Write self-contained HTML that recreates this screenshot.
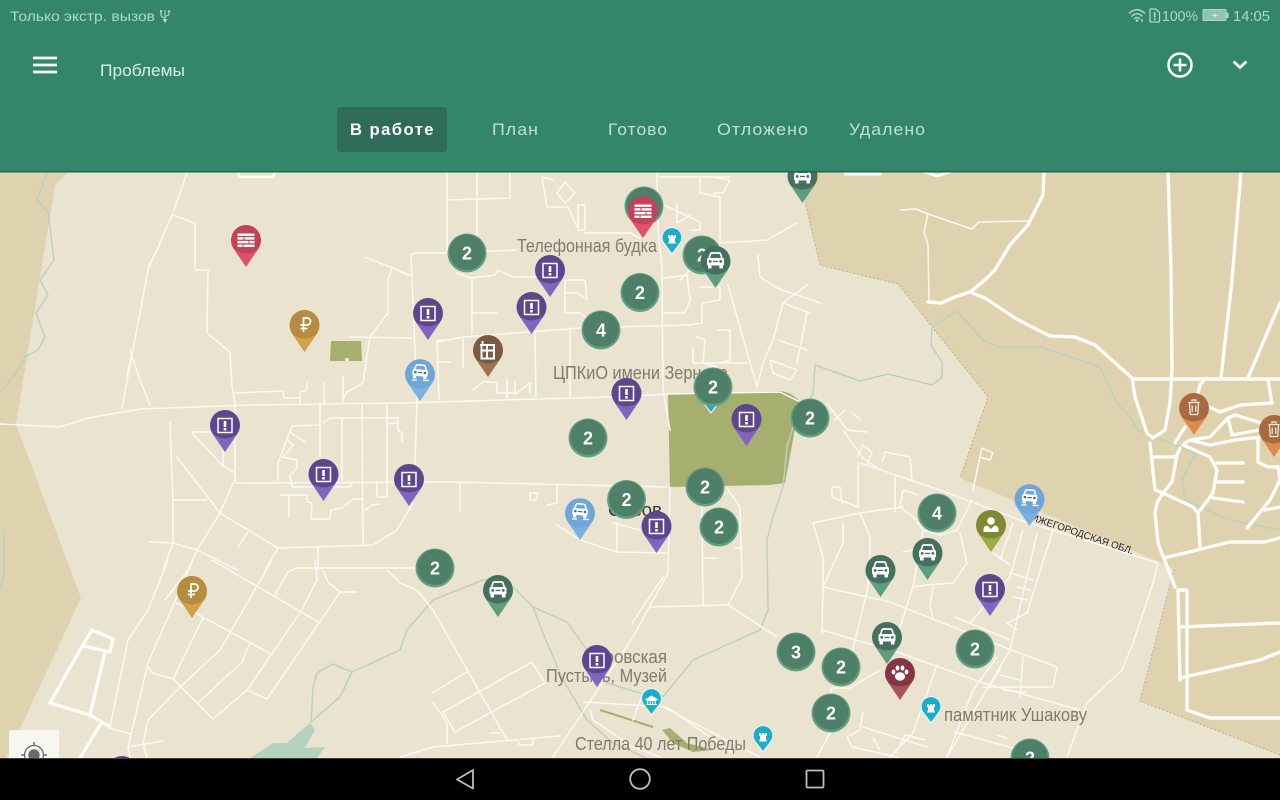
<!DOCTYPE html>
<html lang="ru"><head><meta charset="utf-8"><title>Проблемы</title>
<style>
html,body{margin:0;padding:0;background:#000;width:1280px;height:800px;overflow:hidden}
svg{display:block;font-family:"Liberation Sans","Noto Sans CJK SC",sans-serif}
.t{fill:none;stroke:#FBF9F2;stroke-width:1.5;stroke-linejoin:round;stroke-linecap:round}
.k{fill:none;stroke:#FDFCF8;stroke-width:3.4;stroke-linejoin:round;stroke-linecap:round}
.r{fill:none;stroke:#BBD1BE;stroke-width:1.5;stroke-linejoin:round}
.l{font-size:18px;fill:#85796D}
.n{font-size:18px;font-weight:bold;fill:#fff;text-anchor:middle}
.tab{font-size:17px;fill:#BFE0D2;letter-spacing:1px}
</style></head><body>
<svg width="1280" height="800" viewBox="0 0 1280 800" xmlns="http://www.w3.org/2000/svg">
<defs>
<path id="b" d="M0 0L-12.6-18.5A15 15 0 1 1 12.6-18.5Z"/>
<path id="h" d="M0-42A14.8 14.8 0 0 0-14.8-27A15 15 0 0 0-11-17Q0-10 11-17A15 15 0 0 0 14.8-27A14.8 14.8 0 0 0 0-42Z"/>
<g id="cl"><circle r="19.5" fill="#63A083"/><circle cy="-.8" r="17.8" fill="#4E8068"/></g>
<g id="car"><path d="M-6.5-3.5L-5-8Q-4.6-9-3.5-9H3.5Q4.6-9 5-8L6.5-3.5" fill="none" stroke="#fff" stroke-width="1.7"/><rect x="-8.5" y="-4" width="17" height="7.5" rx="1.6" fill="#fff"/><rect x="-7.5" y="3" width="3.6" height="3.5" rx=".8" fill="#fff"/><rect x="3.9" y="3" width="3.6" height="3.5" rx=".8" fill="#fff"/><circle cx="-5.3" cy="-.6" r="1.4" fill="#466F5E"/><circle cx="5.3" cy="-.6" r="1.4" fill="#466F5E"/><rect x="-2.5" y="-1.2" width="5" height="1.3" fill="#466F5E"/></g>
<g id="p-alert"><use href="#b" fill="#8264BE"/><use href="#h" fill="#5E468F"/><rect x="-7" y="-33.5" width="14" height="14" fill="none" stroke="#fff" stroke-width="1.5"/><rect x="-1.3" y="-31" width="2.6" height="6" fill="#fff"/><rect x="-1.3" y="-24" width="2.6" height="2.5" fill="#fff"/></g>
<g id="p-red"><use href="#b" fill="#DF5368"/><use href="#h" fill="#C04359"/><g fill="#fff"><rect x="-8.5" y="-33.5" width="17" height="2.4"/><rect x="-8.5" y="-29.8" width="6" height="2.4"/><rect x="-1.5" y="-29.8" width="10" height="2.4"/><rect x="-8.5" y="-26.1" width="11" height="2.4"/><rect x="3.5" y="-26.1" width="5" height="2.4"/><rect x="-8.5" y="-22.4" width="5" height="2.4"/><rect x="-2.5" y="-22.4" width="11" height="2.4"/></g></g>
<g id="p-rub"><use href="#b" fill="#CFA24B"/><use href="#h" fill="#B68C40"/><path d="M-1-20V-34H2.500A3.500 3.500 0 0 1 2.500-27H-4M-4-23.500H3" fill="none" stroke="#fff" stroke-width="1.700"/></g>
<g id="p-green"><use href="#b" fill="#5E9E7F"/><use href="#h" fill="#466F5E"/><use href="#car" y="-26"/></g>
<g id="p-blue"><use href="#b" fill="#7AB0E2"/><circle cy="-27" r="14.8" fill="#6FA6D9"/><g transform="translate(0,-27) rotate(5) scale(.9)"><use href="#car" y="-1"/></g><path d="M-8-21H-3M3-20.500H9" stroke="#fff" stroke-width="1.2"/></g>
<g id="p-brown"><use href="#b" fill="#9C7453"/><use href="#h" fill="#7B5942"/><path d="M-5.500-36V-33M-8-32H7M-6.500-32V-18.500H6V-32M-6.500-26.500H6M-1-32V-18.500" fill="none" stroke="#fff" stroke-width="1.900"/></g>
<g id="p-olive"><use href="#b" fill="#9BAB47"/><use href="#h" fill="#7E8A32"/><circle cy="-31" r="3.800" fill="#fff"/><path d="M-7.500-20V-23Q-7.500-26-3.500-26.500L0-23L3.500-26.500Q7.500-26 7.500-23V-20Z" fill="#fff"/></g>
<g id="p-paw"><use href="#b" fill="#A6555F"/><use href="#h" fill="#843743"/><g fill="#fff"><ellipse cy="-23.500" rx="5" ry="4.200"/><ellipse cx="-6.500" cy="-28" rx="1.900" ry="2.500"/><ellipse cx="6.500" cy="-28" rx="1.900" ry="2.500"/><ellipse cx="-2.500" cy="-32" rx="1.900" ry="2.600"/><ellipse cx="2.500" cy="-32" rx="1.900" ry="2.600"/></g></g>
<g id="p-trash"><use href="#b" fill="#DE8A4E"/><use href="#h" fill="#A96A42"/><path d="M-5.500-32.500H5.500M-2-33.500V-35H2V-33.500M-4.500-32L-3.800-20.500H3.800L4.500-32M-1.800-29.500V-23M1.800-29.500V-23" fill="none" stroke="#F4EFE6" stroke-width="1.200"/></g>
<g id="poi"><path d="M0 0L-8.400-11.500A10.300 10.300 0 1 1 8.400-11.500Z" fill="#F4F6F0"/><path d="M0-2L-7.600-12A9.400 9.400 0 1 1 7.600-12Z" fill="#1CAEC8"/><path d="M-4-11.500H4L3-14V-17H4V-20H2V-18.500H1V-20H-1V-18.500H-2V-20H-4V-17H-3V-14Z" fill="#fff"/></g>
<g id="poim"><path d="M0 0L-8.400-11.500A10.300 10.300 0 1 1 8.400-11.500Z" fill="#F4F6F0"/><path d="M0-2L-7.600-12A9.400 9.400 0 1 1 7.600-12Z" fill="#1CAEC8"/><path d="M-5.500-16.500L0-20L5.500-16.500ZM-5-15.500H5M-5.500-11.500H5.500M-3.800-15V-12M-1.300-15V-12M1.300-15V-12M3.800-15V-12" fill="#fff" stroke="#fff" stroke-width="1"/></g>
</defs>

<!-- map base -->
<rect y="172" width="1280" height="586" fill="#EAE3CF"/>
<path d="M0 172H68L55 185L16 424L81 598L10 750L0 770Z" fill="#DED2AF"/>
<path d="M806 172L805 205L820 265L898 284L988 397L960 478L1160 562L1174 569L1140 701L1280 755V172Z" fill="#DED2AF"/>
<path d="M806 205L820 265L898 284L988 397L960 478M1174 569L1140 701L1280 755" fill="none" stroke="#B9AF98" stroke-width="1" stroke-dasharray="2 2"/>
<!-- park -->
<path d="M668 394L780 391Q792 392 800 402L785 483L770 485L670 487Z" fill="#A7AF6F"/>
<path d="M331 341H361L362 361H349V358H345V361H330Z" fill="#A7AF6F"/>
<path d="M662 730L670 728L687 743L713 750L693 752L673 743Z" fill="#A7AF6F"/>
<path d="M600 710L653 727" stroke="#A7AF6F" stroke-width="2" fill="none"/>
<!-- water -->
<path d="M250 758L273 743L287 743L310 723L315 730L305 748L325 747L317 758Z" fill="#B5D1BF"/>
<g class="r">
<path d="M47 173L37 200L48 212L54 260L40 280L48 295L36 313L45 337L38 350L25 357L15 375L0 392"/>
<path d="M4 530V575L0 590"/>
<path d="M311 723L313 687L317 673L333 664L352 672L400 650L407 630L433 600L483 580L500 578"/>
<path d="M311 722L340 697L352 672"/>
<path d="M513 587L533 607L567 622L587 650L607 683L640 693L665 696"/>
<path d="M533 607L543 633L563 680L587 720L613 743L650 760"/>
<path d="M663 697L693 660L760 630L768 610L767 540L772 520L783 487L787 447L793 427L812 395"/>
<path d="M813 395L815 365L860 381L888 374L932 385L942 377L942 362L931 345L932 327L957 311L983 340L998 347L1040 347L1073 358L1100 367L1117 403L1133 420L1137 430L1180 447L1195 453L1182 480L1185 500L1230 520L1280 530"/>
</g>
<!-- thin roads -->
<g class="t">
<!-- main E-W -->
<path d="M0 424L60 427L88 418L140 409L250 405L400 403L610 397L668 394L780 392L800 402"/>
<path d="M122 408L149 265L160 245M187 173L173 213L150 265M133 350L127 375M130 350L140 380L150 405"/>
<path d="M173 215L195 223V270H208L207 333L230 352L232 387L235 405V482"/>
<path d="M234 393L283 391L284 398H300V392L307 390V383M300 392V403M324 383V403M343 377V403M343 400L347 392L363 383L370 337L388 313V280L392 268M365 257L410 275M350 337L412 338"/>
<path d="M415 463L417 400L411 255Q412 253 417 253H447L517 250M400 272L410 275"/>
<path d="M447 173V253M477 173V250M510 173V198L447 200"/>
<path d="M437 340L439 400M437 340H450M437 362H450"/>
<!-- West quarter -->
<path d="M320 405V457M362 405L363 545M387 405V497H377V482M342 418V480M323 423L330 418H398V430L402 433V442M387 424L398 423"/>
<path d="M320 425L292 426L278 463V480M290 432L305 442M287 440L293 445L283 457L297 460V468L290 475L292 487H350L353 482"/>
<path d="M235 483L450 482L667 487"/>
<path d="M280 495H307V502L312 503L311 519H330L331 510L342 508L353 499H363M289 495V517M365 510L372 505L380 504"/>
<path d="M233 483L220 513L197 550L188 570L165 600"/>
<path d="M220 513L278 548L373 545L397 530L413 503"/>
<path d="M170 422L173 503V543L163 570M173 500H207M177 457L220 513"/>
<path d="M192 432H210M192 433L222 465L235 473M223 452V465"/>
<path d="M150 542L173 543L197 550L237 570M248 532L238 547M278 548L265 570M318 548V570"/>
<!-- SW -->
<path d="M168 560L148 610L128 640L110 727"/>
<path d="M193 560L148 663L128 747L130 758"/>
<path d="M148 667L153 673L173 679L213 719L247 690L267 699L340 592H357M173 679L203 618"/>
<path d="M175 602L273 655M212 560L320 623"/>
<path d="M272 560L220 650L180 687L148 720L143 743L147 758M198 703L242 662L250 643"/>
<path d="M315 560L317 580L300 613L247 690"/>
<path d="M275 595L288 572L297 568L450 568M323 570L328 582L340 592M128 747L163 741M387 570L400 583"/>
<path d="M110 728L130 734"/>
<!-- center south -->
<path d="M400 583L417 590L433 610L507 740M443 712L532 662L545 683L455 732ZM432 693L467 672M433 702L447 723V743M400 757L433 747L560 736M517 740L520 745H533V738M490 733H500"/>
<path d="M553 757L633 637L668 573L670 487M632 623L663 577"/>
<path d="M650 607L728 605L777 637M703 605L702 507M728 605L742 577L740 507L727 488"/>
<path d="M460 483V512M557 485V503L547 505M530 493H538L536 500H530ZM557 525L580 540L617 552L667 553M617 523V552M613 523L640 530M702 558H718M735 548H742"/>
<path d="M583 702L667 707L733 753M633 720L643 693M590 710L593 720L633 747L660 757M665 708L760 757"/>
<!-- center north -->
<path d="M535 333L536 397M570 328V397M437 342L463 337L580 328L690 325M463 337V367M472 278V333M457 273L470 278L495 275L498 270L513 277H537M472 313H497"/>
<path d="M473 390L483 382H497V393H517L530 383V393M507 378V398M515 382V393"/>
<path d="M565 280H585L587 300M565 293H577L585 298M565 280V313H580L587 318"/>
<path d="M542 177L547 207H568L577 227M557 193L565 182L575 193L565 203ZM542 177L553 180M578 205H585V230H578ZM585 233H630L640 238"/>
<path d="M657 173L658 230L662 267L663 390L670 430"/>
<path d="M660 177H730M677 203V223L690 215M660 203L700 222V230H690M700 177V193L720 197V243L767 240L797 223M713 177L730 180L723 193H713"/>
<path d="M663 278L687 275L690 300L685 313H663M690 270L680 280"/>
<path d="M728 285L753 373L757 387M700 287H720V300L702 303V323L690 325M718 330H730V360L720 363M697 337L705 340L703 363L717 367M693 347V363H747"/>
<path d="M758 255L760 277L777 288L820 303M807 285L783 303L773 340L763 363L757 387M783 303L810 313M778 340L807 350M770 360L797 370L790 380L773 373ZM807 313L797 363"/>
<!-- east of park -->
<path d="M827 403L847 430L867 432M843 430L863 458L880 470M857 457L863 445L872 452L867 465M835 420L845 410M852 412L860 420"/>
<path d="M858 462V507L832 497V487H840L842 503M860 463L940 490L1020 520L1158 563M882 462L885 452L910 457L912 480M895 477V512M973 490L982 448L993 453L990 460L980 457"/>
<!-- SE quarter -->
<path d="M813 523L860 513L903 507M843 522V543L823 587L822 633M813 523L823 557V587M860 513L870 537V557L868 587L852 653"/>
<path d="M903 490L900 507L913 517L923 530L940 535L957 530L972 500M903 490L918 495M923 530L913 587L897 637M903 552L913 550M960 533L967 563L953 583L927 585L913 587M933 587L930 607L933 617"/>
<path d="M823 587L890 602L943 623L993 643L1057 667L1053 687H983M822 630L897 652L983 683L1080 710"/>
<path d="M993 553L1010 565M1013 523L1000 560M1023 530L1010 577L970 623M1037 533L1010 650L947 757M1053 530L1027 613L1007 623L1017 630M1010 573L1033 580M1017 587L1030 590M1013 597L1027 600M955 617L1010 640"/>
<path d="M997 657L973 690L947 757M1023 657L1020 698M1000 670L990 685M1020 680L1000 675M937 665L913 733L890 757M1003 690L1025 692"/>
<path d="M863 713L860 730L847 737L852 747L897 757M863 727L927 747M817 757L830 733L850 718M955 732L1013 748M997 735L1007 738M873 738L880 750M900 745L905 735L925 740"/>
<path d="M1158 563L1153 583L1133 643L1122 670L1087 703L1067 757"/>
<path d="M833 688H850L880 670M832 688L830 695"/>
<!-- NE thin -->
<path d="M900 210L916 209L928 214L972 229L979 222L1028 221M928 214L924 232L928 245L929 300"/>
</g>
<!-- thick roads -->
<g class="k">
<path d="M1044 172L1043 195L1028 225L1010 245L995 270L985 280L970 292L955 297L941 303L928 302"/>
<path d="M970 292L985 298L1015 318L1030 326L1050 336L1075 337L1095 345L1132 378"/>
<path d="M1168 172L1171 270L1172 370L1170 403L1165 430L1153 438L1147 433L1135 397L1132 378"/>
<path d="M1241 172L1232 280L1221 378M1280 303L1248 378M1132 379H1280"/>
<path d="M1206 378L1200 385L1197 397L1205 405L1220 412L1240 405L1272 403L1268 380"/>
<path d="M1175 443L1185 427M1185 443L1190 440L1210 437L1228 418L1235 415L1265 424M1228 418L1232 435L1260 430M1190 440L1210 445L1235 440L1262 437"/>
<path d="M1183 445L1210 457L1217 470L1213 493L1198 513L1193 507L1163 493L1157 503L1155 513L1158 543L1175 587"/>
<path d="M1150 443L1155 490L1163 493L1172 482L1177 455L1180 448M1153 457H1175M1198 513L1200 547M1164 558L1230 542H1265L1280 538"/>
<path d="M1217 463H1243M1216 482H1243M1213 498L1243 502"/>
<path d="M1258 440V462L1268 467H1278L1280 480L1270 500L1247 528M1265 510L1280 507"/>
<path d="M1178 590H1187V710L1210 718H1280M1178 590L1180 680M1180 627L1280 623M1180 678L1260 660L1280 652"/>
<path d="M50 703L80 650L92 630L113 639L110 652L83 646M50 703L90 715L105 652M90 715L110 727M100 725L80 758"/>
<path d="M845 174H880M925 172L937 176L950 172" stroke-width="3"/>
<path d="M238 172L240 177H273L275 172" stroke-width="2.5"/>
</g>

<!-- labels -->
<text class="l" x="517" y="252" textLength="140" lengthAdjust="spacingAndGlyphs">Телефонная будка</text>
<text class="l" x="553" y="379" textLength="175" lengthAdjust="spacingAndGlyphs">ЦПКиО имени Зернова</text>
<text x="608" y="516" font-size="18" fill="#3A3430" textLength="54" lengthAdjust="spacingAndGlyphs">Сасов</text>
<text class="l" x="584" y="663" textLength="83" lengthAdjust="spacingAndGlyphs">Боровская</text>
<text class="l" x="546" y="682" textLength="121" lengthAdjust="spacingAndGlyphs">Пустынь, Музей</text>
<text class="l" x="575" y="750" textLength="171" lengthAdjust="spacingAndGlyphs">Стелла 40 лет Победы</text>
<text class="l" x="944" y="721" textLength="143" lengthAdjust="spacingAndGlyphs">памятник Ушакову</text>
<text x="1024" y="518" font-size="10" fill="#221E1A" transform="rotate(18.6 1024 518)" textLength="114" lengthAdjust="spacingAndGlyphs">НИЖЕГОРОДСКАЯ ОБЛ.</text>

<!-- POIs -->
<use href="#poi" x="672" y="255"/>
<use href="#poi" x="711" y="414"/>
<use href="#poim" x="651.5" y="716"/>
<use href="#poi" x="763" y="753"/>
<use href="#poi" x="931" y="724"/>

<!-- clusters under pins -->
<g transform="translate(644,206)"><use href="#cl"/></g>
<g transform="translate(702,255)"><use href="#cl"/><text class="n" y="6.500">2</text></g>

<!-- pins -->
<use href="#p-red" x="246" y="267"/>
<use href="#p-red" x="643" y="238"/>
<use href="#p-rub" x="304.5" y="352"/>
<use href="#p-rub" x="192" y="618"/>
<use href="#p-alert" x="550" y="297"/>
<use href="#p-alert" x="531.5" y="334"/>
<use href="#p-alert" x="428" y="340"/>
<use href="#p-alert" x="626.5" y="420"/>
<use href="#p-alert" x="746.5" y="446"/>
<use href="#p-alert" x="225" y="452"/>
<use href="#p-alert" x="323.5" y="501"/>
<use href="#p-alert" x="409" y="506"/>
<use href="#p-alert" x="990" y="616"/>
<use href="#p-alert" x="122" y="798"/>
<use href="#p-blue" x="420" y="401"/>
<use href="#p-blue" x="580" y="540"/>
<use href="#p-blue" x="1029.5" y="526"/>
<use href="#p-brown" x="488" y="377"/>
<use href="#p-green" x="715.5" y="288"/>
<use href="#p-green" x="802.5" y="203"/>
<use href="#p-green" x="498" y="617"/>
<use href="#p-green" x="880.5" y="597"/>
<use href="#p-green" x="927.5" y="580"/>
<use href="#p-green" x="887" y="664"/>
<use href="#p-olive" x="991" y="552"/>
<use href="#p-paw" x="900" y="700"/>
<use href="#p-trash" x="1194" y="435"/>
<use href="#p-trash" x="1274" y="457"/>

<!-- clusters -->
<g transform="translate(467,253)"><use href="#cl"/><text class="n" y="6.500">2</text></g>
<g transform="translate(640,292.5)"><use href="#cl"/><text class="n" y="6.500">2</text></g>
<g transform="translate(601,330)"><use href="#cl"/><text class="n" y="6.500">4</text></g>
<g transform="translate(713,387)"><use href="#cl"/><text class="n" y="6.500">2</text></g>
<g transform="translate(810,418)"><use href="#cl"/><text class="n" y="6.500">2</text></g>
<g transform="translate(588,438)"><use href="#cl"/><text class="n" y="6.500">2</text></g>
<g transform="translate(705,487)"><use href="#cl"/><text class="n" y="6.500">2</text></g>
<g transform="translate(626.5,499.5)"><use href="#cl"/><text class="n" y="6.500">2</text></g>
<g transform="translate(719,527)"><use href="#cl"/><text class="n" y="6.500">2</text></g>
<g transform="translate(937,513)"><use href="#cl"/><text class="n" y="6.500">4</text></g>
<g transform="translate(435,568)"><use href="#cl"/><text class="n" y="6.500">2</text></g>
<g transform="translate(796,652)"><use href="#cl"/><text class="n" y="6.500">3</text></g>
<g transform="translate(841,667)"><use href="#cl"/><text class="n" y="6.500">2</text></g>
<g transform="translate(975,649)"><use href="#cl"/><text class="n" y="6.500">2</text></g>
<g transform="translate(831,713)"><use href="#cl"/><text class="n" y="6.500">2</text></g>
<g transform="translate(1030,758)"><use href="#cl"/><text class="n" y="6.500">2</text></g>
<!-- pins above clusters / labels -->
<use href="#p-alert" x="656.5" y="553"/>
<use href="#p-alert" x="597" y="687"/>

<!-- location button -->
<rect x="9" y="730" width="50" height="34" rx="2" fill="#F8F6F0"/>
<g transform="translate(34,755)" fill="none" stroke="#6A6A6A"><circle r="9.500" stroke-width="1.300"/><circle r="5.700" fill="#6A6A6A" stroke="none"/><path d="M0-13V-9M-13 0H-9M13 0H9" stroke-width="1.500"/></g>

<!-- header -->
<rect width="1280" height="171" fill="#34866B"/>
<rect y="171" width="1280" height="1.500" fill="#1E6A50"/>
<text x="10" y="21" font-size="14" fill="#B0D8C7" textLength="145" lengthAdjust="spacingAndGlyphs">Только экстр. вызов</text>
<path d="M165 10V22M165 22L163.500 19.500H166.500ZM161 12V15Q161 17 165 18M169 12V14Q169 15.500 165 16.500" fill="none" stroke="#B0D8C7" stroke-width="1.100"/>
<rect x="160" y="10" width="2" height="2.500" fill="#B0D8C7"/><circle cx="169" cy="11.500" r="1.200" fill="#B0D8C7"/>

<!-- status right -->
<g fill="none" stroke="#B0D8C7" stroke-width="1.500"><path d="M1129 13.500Q1137 6 1145 13.500M1131.500 16.500Q1137 11 1142.500 16.500M1134 19Q1137 16 1140 19"/></g>
<circle cx="1137" cy="20.500" r="1.300" fill="#B0D8C7"/><circle cx="1142" cy="20.500" r="1.100" fill="#B0D8C7"/>
<path d="M1150.500 9H1156L1159.500 12.500V21.500Q1159.500 22 1159 22H1150.500Q1150 22 1150 21.500V9.500Q1150 9 1150.500 9Z" fill="none" stroke="#B0D8C7" stroke-width="1.300"/>
<rect x="1153.800" y="12" width="1.800" height="5.500" fill="#B0D8C7"/><rect x="1153.800" y="18.300" width="1.800" height="1.800" fill="#B0D8C7"/>
<text x="1162" y="21" font-size="14.500" fill="#B0D8C7" textLength="36" lengthAdjust="spacingAndGlyphs">100%</text>
<rect x="1203" y="9.500" width="23" height="11" rx="1" fill="#8FC4AE" stroke="#B0D8C7"/>
<rect x="1226.500" y="12.500" width="2" height="5.500" fill="#B0D8C7"/>
<path d="M1210 15H1214L1215 12.800L1215.500 15H1219.500L1215.500 15.800L1215 17.800L1214 15.800Z" fill="#E5F3ED"/>
<text x="1233" y="21" font-size="14.500" fill="#B0D8C7" textLength="37" lengthAdjust="spacingAndGlyphs">14:05</text>

<!-- toolbar -->
<path d="M33 58H57M33 65H57M33 72H57" stroke="#F5FBF8" stroke-width="2.800" fill="none"/>
<text x="100" y="76" font-size="17" fill="#D9EEE5" textLength="85" lengthAdjust="spacingAndGlyphs">Проблемы</text>
<circle cx="1180" cy="65" r="11.500" fill="none" stroke="#fff" stroke-width="2.500"/>
<path d="M1173.500 65H1186.500M1180 58.500V71.500" stroke="#fff" stroke-width="2.500" fill="none"/>
<path d="M1233.500 61.500L1240 67.500L1246.500 61.500" stroke="#fff" stroke-width="2.600" fill="none"/>

<!-- tabs -->
<rect x="337" y="107" width="110" height="45" rx="4" fill="#2F6B59"/>
<text x="350" y="135" font-size="17" font-weight="bold" fill="#fff" textLength="85" lengthAdjust="spacingAndGlyphs" style="letter-spacing:1.5px">В работе</text>
<text class="tab" x="492" y="135" textLength="47" lengthAdjust="spacingAndGlyphs">План</text>
<text class="tab" x="608" y="135" textLength="60" lengthAdjust="spacingAndGlyphs">Готово</text>
<text class="tab" x="717" y="135" textLength="92" lengthAdjust="spacingAndGlyphs">Отложено</text>
<text class="tab" x="849" y="135" textLength="77" lengthAdjust="spacingAndGlyphs">Удалено</text>

<!-- nav bar -->
<rect y="758" width="1280" height="42" fill="#000"/>
<rect y="758" width="1280" height="1" fill="#3B3B38"/>
<path d="M473 770V788.500L457 779.500Z" fill="none" stroke="#BDBDBD" stroke-width="1.800" stroke-linejoin="round"/>
<circle cx="640" cy="779" r="9.800" fill="none" stroke="#BDBDBD" stroke-width="1.800"/>
<rect x="806.500" y="770.500" width="17" height="17" rx="1" fill="none" stroke="#BDBDBD" stroke-width="1.800"/>
</svg>
</body></html>
